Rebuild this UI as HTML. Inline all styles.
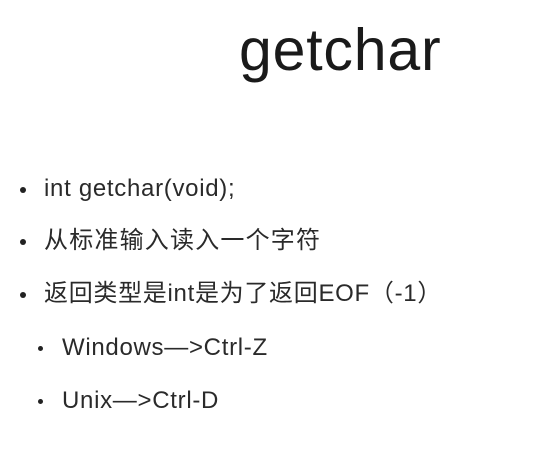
<!DOCTYPE html>
<html><head><meta charset="utf-8"><style>
body{margin:0;width:541px;height:456px;background:#fff;position:relative;overflow:hidden;font-family:"Liberation Sans","Noto Sans CJK SC",sans-serif;color:#2a2a2a}
.t{position:absolute;white-space:nowrap}
.title{left:239px;top:16px;font-size:59px;line-height:68px;color:#1a1a1a;letter-spacing:0.8px}
.l{font-size:24px;line-height:28px;letter-spacing:0.7px}
.c{letter-spacing:1.2px}
.b{position:absolute;width:6px;height:6px;border-radius:50%;background:#222}
.s{width:5px;height:5px}
</style></head><body>
<div class="t title">getchar</div>
<div class="b" style="left:20px;top:187px"></div>
<div class="t l" style="left:44px;top:175px">int getchar(void);</div>
<div class="b" style="left:20px;top:239px"></div>
<div class="t l c" style="left:44px;top:227px">从标准输入读入一个字符</div>
<div class="b" style="left:20px;top:292px"></div>
<div class="t l" style="left:44px;top:280px">返回类型是int是为了返回EOF（-1）</div>
<div class="b s" style="left:38px;top:346px"></div>
<div class="t l" style="left:62px;top:334px">Windows—&gt;Ctrl-Z</div>
<div class="b s" style="left:38px;top:399px"></div>
<div class="t l" style="left:62px;top:387px">Unix—&gt;Ctrl-D</div>
</body></html>
